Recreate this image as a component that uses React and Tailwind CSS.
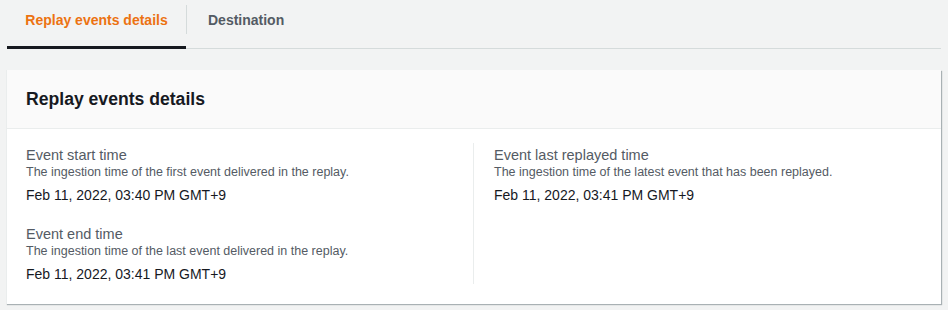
export default function App() {
  const font = { fontFamily: '"Liberation Sans", Arial, sans-serif' };
  return (
    <div className="w-[948px] h-[310px] bg-[#f2f3f3] overflow-hidden" style={font}>
      <div className="pl-[7px] pr-[7px]">
        <div className="flex border-b border-[#d5dbdb] h-[49px]">
          <div className="relative w-[179px] flex items-start justify-center pt-[10px] border-b-[3px] border-[#16191f] -mb-[1px]">
            <span className="text-[14px] font-bold text-[#ec7211] leading-[20px]">Replay events details</span>
          </div>
          <div className="w-px bg-[#d5dbdb] mt-[5px] h-[29px]"></div>
          <div className="flex items-start pt-[10px] pl-[21px]">
            <span className="text-[14px] font-bold text-[#545b64] leading-[20px]">Destination</span>
          </div>
        </div>
      </div>
      <div className="mt-[21px] ml-[6px] w-[935px] bg-white border-l border-[#eaeded] shadow-[1px_1px_1px_0_rgba(0,28,36,0.3)]">
        <div className="h-[59px] bg-[#fafafa] border-b border-[#eaeded] flex items-center pl-[19px]">
          <h2 className="text-[17.6px] font-bold text-[#16191f] leading-[22px]">Replay events details</h2>
        </div>
        <div className="flex pt-[14px] pb-[20px]">
          <div className="w-[467px] pl-[19px] pt-[2px] border-r border-[#eaeded] flex flex-col gap-[19px]">
            <Field label="Event start time" desc="The ingestion time of the first event delivered in the replay." value="Feb 11, 2022, 03:40 PM GMT+9" />
            <Field label="Event end time" desc="The ingestion time of the last event delivered in the replay." value="Feb 11, 2022, 03:41 PM GMT+9" />
          </div>
          <div className="pl-[20px] pt-[2px]">
            <Field label="Event last replayed time" desc="The ingestion time of the latest event that has been replayed." value="Feb 11, 2022, 03:41 PM GMT+9" />
          </div>
        </div>
      </div>
    </div>
  );
}

function Field({ label, desc, value }) {
  return (
    <div className="pt-[2px]">
      <div className="text-[14.5px] text-[#545b64] leading-[17px]">{label}</div>
      <div className="text-[12.5px] text-[#545b64] leading-[16px]">{desc}</div>
      <div className="text-[14px] text-[#16191f] leading-[20px] mt-[5px]">{value}</div>
    </div>
  );
}
